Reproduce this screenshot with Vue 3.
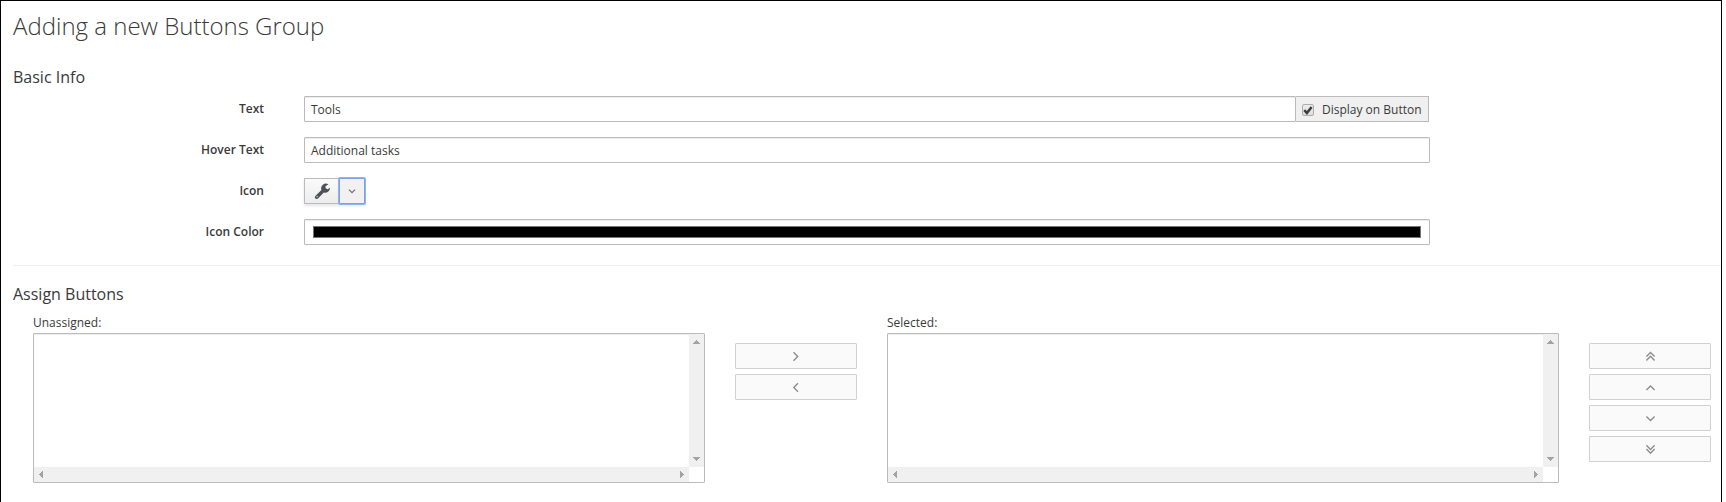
<script setup>
const lists = [
  {
    label: 'Unassigned:',
    buttons: [
      { name: 'Add', path: 'M3.5 2.3 7.7 6.5 3.5 10.7' },
      { name: 'Remove', path: 'M8 2.3 3.8 6.5 8 10.7' },
    ],
  },
  {
    label: 'Selected:',
    buttons: [
      { name: 'Move to top', path: 'M2.4 6.6 6.5 2.5 10.6 6.6M2.4 10.4 6.5 6.3 10.6 10.4' },
      { name: 'Move up', path: 'M2.4 9 6.5 4.9 10.6 9' },
      { name: 'Move down', path: 'M2.4 4.5 6.5 8.6 10.6 4.5' },
      { name: 'Move to bottom', path: 'M2.4 2.3 6.5 6.4 10.6 2.3M2.4 6.1 6.5 10.2 10.6 6.1' },
    ],
  },
]
</script>

<template>
  <div class="page">
    <h1>Adding a new Buttons Group</h1>
    <h3>Basic Info</h3>
    <div class="form">
      <div class="row">
        <span class="label">Text</span>
        <div class="group">
          <div class="input grow">Tools</div>
          <div class="addon">
            <span class="check">
              <svg width="10" height="10" viewBox="0 0 10 10"><path d="M1.3 5.2 3.9 8 8.6 2" /></svg>
            </span>
            <span class="check-text">Display on Button</span>
          </div>
        </div>
      </div>
      <div class="row">
        <span class="label">Hover Text</span>
        <div class="input full">Additional tasks</div>
      </div>
      <div class="row">
        <span class="label">Icon</span>
        <div class="picker">
          <button class="glyph" aria-label="Icon">
            <svg width="17" height="17" viewBox="0 0 16 16">
              <path fill="#4d5258" fill-rule="evenodd" d="M15.1 4.4A4.6 4.6 0 0 1 9.2 8.9L4 14.3Q2.7 15.7 1.4 14.5T1.5 11.9L7 6.7A4.6 4.6 0 0 1 13.6 1.1L10.8 3 11 5 12.8 5.9ZM2.3 12.9a.6.6 0 1 0 1.2 0a.6.6 0 1 0-1.2 0Z" />
            </svg>
          </button>
          <button class="toggle" aria-label="Choose icon">
            <svg width="9" height="9" viewBox="0 0 9 9"><path d="M1 2.7 4 5.7 7 2.7" /></svg>
          </button>
        </div>
      </div>
      <div class="row">
        <span class="label">Icon Color</span>
        <div class="input full color"><div class="swatch"></div></div>
      </div>
    </div>
    <hr />
    <h3>Assign Buttons</h3>
    <div class="lists">
      <template v-for="l in lists" :key="l.label">
        <div class="column">
          <div class="caption">{{ l.label }}</div>
          <div class="listbox">
            <div class="area"></div>
            <div class="bar vertical">
              <svg width="7" height="4" shape-rendering="crispEdges"><path d="M0 4 3.5 0 7 4Z" /></svg>
              <svg width="7" height="4" shape-rendering="crispEdges"><path d="M0 0 3.5 4 7 0Z" /></svg>
            </div>
            <div class="bar horizontal">
              <svg width="4" height="7" shape-rendering="crispEdges"><path d="M4 0 0 3.5 4 7Z" /></svg>
              <svg width="4" height="7" shape-rendering="crispEdges"><path d="M0 0 4 3.5 0 7Z" /></svg>
            </div>
          </div>
        </div>
        <div class="actions">
          <button v-for="b in l.buttons" :key="b.name" :aria-label="b.name">
            <svg width="13" height="13" viewBox="0 0 13 13"><path :d="b.path" /></svg>
          </button>
        </div>
      </template>
    </div>
  </div>
</template>

<style>
body {
  margin: 0;
  background: #fff;
  overflow: hidden;
}
</style>

<style scoped>
* {
  box-sizing: border-box;
}
.page {
  width: 1722px;
  height: 502px;
  border: solid #000;
  border-width: 1px 1px 0;
  padding: 8px 0 0 12px;
  font: 12px/20px "Open Sans", sans-serif;
  color: #3a3a3a;
  overflow: hidden;
}
h1 {
  margin: 0;
  font-size: 24px;
  line-height: 33px;
  font-weight: 300;
}
h3 {
  margin: 0;
  font-size: 16px;
  line-height: 22px;
  font-weight: 400;
}
h1 + h3 {
  margin-top: 24px;
}
.form {
  margin-top: 8px;
  display: flex;
  flex-direction: column;
  gap: 15px;
}
.row {
  display: flex;
  height: 26px;
}
.label {
  width: 251px;
  margin-right: 40px;
  padding-top: 3px;
  text-align: right;
  font-weight: 600;
}
.input {
  height: 26px;
  border: 1px solid #bbb;
  border-radius: 1px;
  padding: 4px 6px 2px;
  line-height: 18px;
  box-shadow: inset 0 1px 1px rgba(3, 3, 3, 0.075);
}
.full {
  width: 1126px;
}
.group {
  display: flex;
  width: 1125px;
}
.grow {
  flex: 1;
}
.addon {
  width: 133px;
  display: flex;
  align-items: center;
  gap: 9px;
  padding: 0 0 0 6px;
  border: 1px solid #bbb;
  border-left: 0;
  background: #f0f0f0;
  line-height: 18px;
  white-space: nowrap;
}
.check {
  width: 12px;
  height: 12px;
  margin-top: 1px;
  border: 1px solid #adadad;
  border-radius: 2px;
  background: linear-gradient(#ededed, #dedede);
  display: flex;
}
.check-text {
  padding-top: 2px;
  margin-left: -1px;
}
.check path {
  fill: none;
  stroke: #3c3c3c;
  stroke-width: 2.5;
}
.picker {
  display: flex;
}
button {
  margin: 0;
  padding: 0;
  display: flex;
  align-items: center;
  justify-content: center;
  border: 1px solid #bbb;
  border-radius: 1px;
}
.glyph {
  width: 35px;
  height: 26px;
  border-right: 0;
  background: linear-gradient(#fafafa, #ededed);
  box-shadow: 0 2px 3px rgba(3, 3, 3, 0.1);
}
.glyph svg {
  margin-left: 1px;
}
.toggle {
  width: 26px;
  height: 26px;
  border-color: #7d9fdc;
  background: #f1f1f1;
  box-shadow: 0 0 0 1px #8db5f8, 0 2px 3px rgba(3, 3, 3, 0.1);
}
.toggle path,
.actions path {
  fill: none;
  stroke: #6a6e72;
  stroke-width: 1.2;
}
.color {
  padding: 6px 8px;
}
.swatch {
  height: 12px;
  border: 1px solid #777;
  background: #000;
}
hr {
  margin: 20px 0 17px;
  border: 0;
  height: 1px;
  background: #eee;
}
.lists {
  display: flex;
  margin: 8px 0 0 20px;
}
.column {
  flex: none;
  width: 672px;
}
.caption {
  height: 20px;
}
.listbox {
  height: 150px;
  border: 1px solid #bbb;
  border-radius: 1px;
  display: grid;
  grid-template-columns: 1fr 15px;
  grid-template-rows: 1fr 15px;
}
.area {
  box-shadow: inset 0 1px 1px rgba(3, 3, 3, 0.075);
}
.bar {
  display: flex;
  justify-content: space-between;
  align-items: center;
  background: #f0f0f0;
  fill: #a3a3a3;
}
.vertical {
  flex-direction: column;
  padding: 6px 0;
}
.horizontal {
  padding: 0 5px;
}
.actions {
  flex: none;
  width: 122px;
  margin: 30px 30px 0;
  display: flex;
  flex-direction: column;
  gap: 5px;
}
.actions button {
  height: 26px;
  border-color: #d1d1d1;
  background: #fafafa;
}
.actions path {
  stroke: #8b8d8f;
  stroke-width: 1.4;
}
</style>
